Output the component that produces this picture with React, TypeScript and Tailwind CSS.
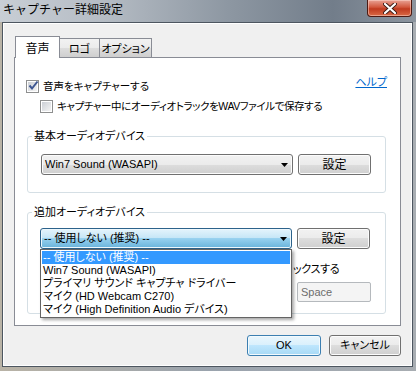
import React from "react";

const ui =
  "font-['Liberation_Sans','Noto_Sans_CJK_JP',sans-serif] [font-feature-settings:'palt'] text-[11px] text-black";

const btnGray =
  "border border-[#707070] rounded-[3px] bg-[linear-gradient(#f2f2f2,#ebebeb_50%,#dddddd_50%,#cfcfcf)] shadow-[inset_0_0_0_1px_#fcfcfc]";
const btnBlue =
  "border border-[#3c7fb1] rounded-[3px] bg-[linear-gradient(#eaf6fd,#d9f0fc_50%,#bee6fd_50%,#a7d9f5)] shadow-[inset_0_0_0_1px_#f2fafe]";
const comboOpen =
  "border border-[#2c628b] rounded-[3px] bg-[linear-gradient(#e5f4fc,#c4e5f6_50%,#98d1ef_50%,#68b3db)] shadow-[inset_0_0_0_1px_#eef8fd]";

function Checkbox({ checked }: { checked?: boolean }) {
  return (
    <span className="flex size-[13px] shrink-0 items-center justify-center border border-[#8e8f8f] bg-white">
      <span className="relative flex size-[9px] items-center justify-center bg-[linear-gradient(135deg,#cbcfd5,#f4f4f4)]">
        {checked && (
          <svg width="11" height="11" viewBox="0 0 11 11" className="absolute -top-[2px] left-0">
            <path d="M1.5 5.5 L4 8.5 L9.5 1.5" stroke="#3d5691" strokeWidth="2" fill="none" />
          </svg>
        )}
      </span>
    </span>
  );
}

function Arrow() {
  return (
    <svg width="7" height="4" viewBox="0 0 7 4" className="shrink-0">
      <path d="M0 0 H7 L3.5 4 Z" fill="#000" />
    </svg>
  );
}

function Combo({ label, open }: { label: string; open?: boolean }) {
  return (
    <div
      className={`flex h-[21px] w-[252px] items-center justify-between pl-[3px] pr-[4px] ${
        open ? comboOpen : btnGray
      }`}
    >
      <span className="leading-none">{label}</span>
      <Arrow />
    </div>
  );
}

function SetButton() {
  return (
    <div className={`flex h-[21px] w-[73px] items-center justify-center ${btnGray}`}>
      <span className="text-[12px] leading-none">設定</span>
    </div>
  );
}

const devices = [
  "-- 使用しない (推奨) --",
  "Win7 Sound (WASAPI)",
  "プライマリ サウンド キャプチャ ドライバー",
  "マイク (HD Webcam C270)",
  "マイク (High Definition Audio デバイス)",
];

export default function App() {
  return (
    <div
      className={`flex h-[371px] w-[416px] flex-col overflow-hidden bg-[linear-gradient(90deg,#b9b3a6,#9aa3ad_50%,#a8adb2)] ${ui}`}
    >
      {/* タイトルバー */}
      <div className="flex h-[22px] items-start justify-between bg-[linear-gradient(90deg,#c8ced5,#b5bcc4_25%,#8d97a2_55%,#727d8a_80%,#8c959f)]">
        <span className="pl-[3px] pt-[2px] text-[12px] leading-[17px] [font-feature-settings:normal] text-black">
          キャプチャー詳細設定
        </span>
        <div className="mr-[4px] flex h-[17px] w-[45px] items-center justify-center rounded-b-[4px] border border-t-0 border-[#4c1a12] bg-[linear-gradient(#e9a395,#d2573d_45%,#c03a1f_55%,#d96a45)] shadow-[inset_0_0_0_1px_rgba(255,220,210,0.5)]">
          <svg width="14" height="11" viewBox="0 0 14 11">
            <path d="M2 1 L12 10 M12 1 L2 10" stroke="#3a1a14" strokeWidth="4" strokeLinecap="round" />
            <path d="M2 1 L12 10 M12 1 L2 10" stroke="#fff" strokeWidth="2.2" strokeLinecap="round" />
          </svg>
        </div>
      </div>

      {/* クライアント領域 */}
      <div className="mb-[4px] ml-[2px] mr-[3px] flex flex-1 flex-col border border-[#4d5660] bg-[#f0f0f0] shadow-[inset_0_0_0_1px_#ffffff]">
        {/* タブ */}
        <div className="flex items-end pl-[12px] pt-[13px]">
          <div className="relative z-10 -mb-px flex h-[22px] w-[45px] justify-center border border-b-0 border-[#898c95] bg-white pt-[3px] text-[12px]">
            音声
          </div>
          <div className="-ml-px flex h-[19px] w-[41px] justify-center border border-b-0 border-[#898c95] bg-[linear-gradient(#f2f2f2,#ebebeb_50%,#dddddd_50%,#cfcfcf)] pt-[2px] text-[11px]">
            ロゴ
          </div>
          <div className="-ml-px flex h-[19px] w-[53px] justify-center border border-b-0 border-[#898c95] bg-[linear-gradient(#f2f2f2,#ebebeb_50%,#dddddd_50%,#cfcfcf)] pt-[2px] text-[11px]">
            オプション
          </div>
        </div>

        {/* タブパネル */}
        <div className="ml-[11px] flex h-[269px] w-[387px] flex-col border border-[#898c95] bg-white">
          <div className="mt-[22px] flex items-center justify-between pl-[11px] pr-[13px]">
            <div className="flex items-center gap-[4px]">
              <Checkbox checked />
              <span className="text-[10.5px] leading-[13px]">音声をキャプチャーする</span>
            </div>
            <span className="-mt-[8px] text-[#0066cc] underline">ヘルプ</span>
          </div>

          <div className="mt-[7px] flex items-center gap-[4px] pl-[25px]">
            <Checkbox />
            <span className="text-[10.5px] leading-[13px] tracking-[-0.4px]">
              キャプチャー中にオーディオトラックをWAVファイルで保存する
            </span>
          </div>

          {/* 基本オーディオデバイス */}
          <fieldset className="ml-[12px] mt-[16px] w-[359px] rounded-[3px] border border-[#d5dfe5] pb-[17px] pl-[13px] pt-[10px]">
            <legend className="-ml-[9px] px-[2px] text-[11px] leading-[15px]">基本オーディオデバイス</legend>
            <div className="flex items-center gap-[5px]">
              <Combo label="Win7 Sound (WASAPI)" />
              <SetButton />
            </div>
          </fieldset>

          {/* 追加オーディオデバイス */}
          <fieldset className="ml-[12px] mt-[12px] w-[359px] rounded-[3px] border border-[#d5dfe5] pb-[11px] pl-[12px] pt-[8px]">
            <legend className="-ml-[8px] px-[2px] text-[11px] leading-[15px]">追加オーディオデバイス</legend>
            <div className="flex items-center gap-[5px]">
              <div className="relative">
                <Combo label="-- 使用しない (推奨) --" open />
                <ul className="absolute left-0 top-full z-20 w-[252px] border border-[#646464] bg-white p-px shadow-[2px_2px_3px_rgba(0,0,0,0.35)]">
                  {devices.map((d, i) => (
                    <li
                      key={d}
                      className={`h-[13px] pl-[1px] text-[11px] leading-[13px] ${
                        i === 0 ? "bg-[#3399ff] text-white" : ""
                      }`}
                    >
                      {d}
                    </li>
                  ))}
                </ul>
              </div>
              <SetButton />
            </div>
            {/* ドロップダウンに隠れた行の見えている部分 */}
            <div className="mt-[13px] pl-[253px] text-[11px] leading-[15px] tracking-[-0.3px]">ックスする</div>
            <div className="mt-[5px] flex justify-end pr-[14px]">
              <div className="flex h-[20px] w-[74px] items-center rounded-[2px] border border-[#b5b9bd] bg-[#f4f4f4] pl-[3px] text-[#6d6d6d]">
                Space
              </div>
            </div>
          </fieldset>
        </div>

        {/* ボタン */}
        <div className="mt-[9px] flex justify-end gap-[8px] pr-[11px]">
          <div className={`flex h-[21px] w-[74px] items-center justify-center ${btnBlue}`}>OK</div>
          <div className={`flex h-[21px] w-[72px] items-center justify-center ${btnGray}`}>キャンセル</div>
        </div>
      </div>
    </div>
  );
}
